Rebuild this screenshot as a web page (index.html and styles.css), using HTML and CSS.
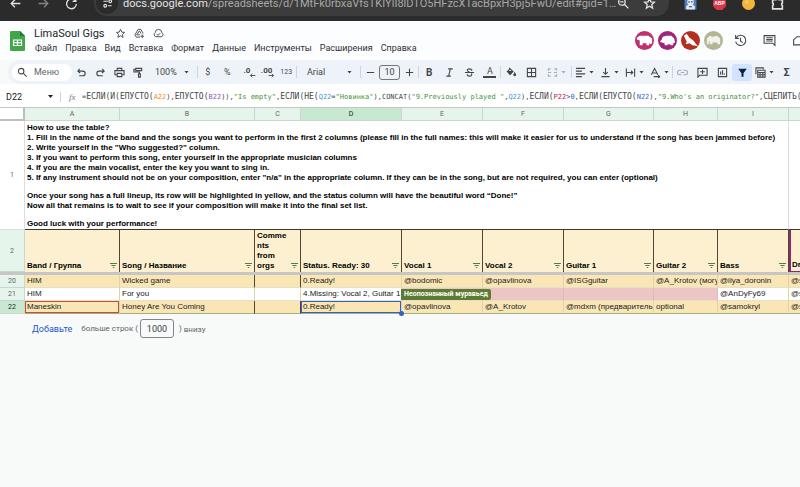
FILE: index.html
```html
<!DOCTYPE html>
<html lang="ru">

<head>
    <meta charset="UTF-8">
    <meta name="viewport" content="width=device-width, initial-scale=1.0">
    <title>LimaSoul Gigs</title>
    <link rel="stylesheet" href="styles.css">
</head>

<body>
    <div class="browser">
        <div class="browser-row">
            <button class="nav-btn" aria-label="Back"><svg viewBox="0 0 24 24"><path d="M21 12H4M11 5l-7 7 7 7" /></svg></button>
            <button class="nav-btn dim" aria-label="Forward"><svg viewBox="0 0 24 24"><path d="M3 12h17M13 5l7 7-7 7" /></svg></button>
            <button class="nav-btn" aria-label="Reload"><svg viewBox="0 0 24 24"><path d="M19 7a9 9 0 1 0 2 6M20 2v6h-6" /></svg></button>
            <div class="address">
                <button class="site-info" aria-label="Site info"><svg viewBox="0 0 24 24"><path d="M3 7h10M13 17h8" /><circle cx="18" cy="7" r="3" /><circle cx="7" cy="17" r="3" /></svg></button>
                <span class="url">docs.google.com<span class="path">/spreadsheets/d/1MtFk0rbxaVfsTKIYlI8lDTO5HFzcXTacBpxH3pj5FwU/edit#gid=1…</span></span>
                <svg class="address-icon" viewBox="0 0 24 24"><circle cx="9" cy="9" r="6" /><path d="M13.500 13.500L21 21M6 9h6" /></svg>
                <svg class="address-icon" viewBox="0 0 24 24"><path d="M12 3l2.700 6 6.300.6-4.800 4.300 1.500 6.500L12 17l-5.700 3.400 1.500-6.500L3 9.600 9.300 9z" /></svg>
            </div>
            <div class="extensions">
                <svg viewBox="0 0 24 24"><rect x="1" y="1" width="22" height="22" fill="#4f7fb5" /><path d="M4 23v-6l4-3h8l4 3v6z" fill="#dfe9f2" /><circle cx="12" cy="9" r="6" fill="#e8eef4" /><path d="M8 9h3M13 9h3M9 18h6" stroke="#27507e" stroke-width="2" /></svg>
                <svg viewBox="0 0 24 24"><path d="M7 0h10l7 7v10l-7 7H7l-7-7V7z" fill="#d9364c" /><text x="12" y="15" class="abp">ABP</text></svg>
                <svg viewBox="0 0 24 24"><circle cx="12" cy="12" r="12" fill="#f3b53c" /><circle cx="9" cy="9" r="3" fill="#f8cf75" /></svg>
                <svg viewBox="0 0 24 24"><path d="M3 5h6a3 3 0 0 1 6 0h6v6a3 3 0 0 0 0 5v6H3v-6a3 3 0 0 0 0-5z" fill="none" stroke="#e3e3e3" stroke-width="3" /></svg>
            </div>
        </div>
    </div>

    <header class="doc-header">
        <svg class="sheets-logo" viewBox="0 0 15 20"><path d="M1 0h9l5 5v14a1 1 0 0 1-1 1H1a1 1 0 0 1-1-1V1a1 1 0 0 1 1-1z" fill="#41a64a" /><path d="M10 0l5 5h-5z" fill="#237a35" /><path d="M3.500 9h8v5.500h-8zM7.500 9v5.500M3.500 11.700h8" fill="none" stroke="#fff" stroke-width="1.200" /></svg>
        <div class="doc-info">
            <div class="title-row">
                <h1>LimaSoul Gigs</h1>
                <button class="icon-btn" aria-label="Star"><svg viewBox="0 0 24 24"><path d="M12 3l2.700 6 6.300.6-4.800 4.300 1.500 6.500L12 17l-5.700 3.400 1.500-6.500L3 9.600 9.300 9z" /></svg></button>
                <button class="icon-btn" aria-label="Move"><svg viewBox="0 0 24 24"><path d="M13 20H5l-3-5L9 3h6l5 9M6 15l6-9 3 6M6 15h7M18 14v8M14 18h8" /></svg></button>
                <button class="icon-btn" aria-label="Saved"><svg viewBox="0 0 24 24"><path d="M6 19a5 5 0 0 1-1-9 7 7 0 0 1 14 0 5 5 0 0 1 0 9zM8 13l3 3 5-5" /></svg></button>
            </div>
            <nav class="menu">
                <a href="#">Файл</a>
                <a href="#">Правка</a>
                <a href="#">Вид</a>
                <a href="#">Вставка</a>
                <a href="#">Формат</a>
                <a href="#">Данные</a>
                <a href="#">Инструменты</a>
                <a href="#">Расширения</a>
                <a href="#">Справка</a>
            </nav>
        </div>
        <div class="people">
            <svg viewBox="0 0 20 20"><circle cx="10" cy="10" r="10" fill="#c0316b" /><path d="M2 7l3-2h9l4 3v5l-2 1-1-2v3h-3v-2H8v2H5v-5l-3-1z" fill="#fff" /></svg>
            <svg viewBox="0 0 20 20"><circle cx="10" cy="10" r="10" fill="#a0237c" /><path d="M2 11l2-2 1-3 4-1h5l3 3 1 4-2 1v2h-3v-1h-3v1H7v-2l-3-1z" fill="#fff" /></svg>
            <svg viewBox="0 0 20 20"><circle cx="10" cy="10" r="10" fill="#b3301f" /><path d="M3 5l3-2 3 4 4 3 3 4 2 2-6-1-3-2-4 1 1-3-2-4z" fill="#fff" /></svg>
            <svg viewBox="0 0 20 20"><circle cx="10" cy="10" r="10" fill="#b3b595" /><path d="M3 14V8l3-3 3 1 5-1 3 3v6h-3v-2H9v2H6v-3H5v3z" fill="#f2f2e8" /></svg>
        </div>
        <div class="doc-actions">
            <button class="icon-btn big" aria-label="History"><svg viewBox="0 0 24 24"><path d="M4 7a9.500 9.500 0 1 1-1 7M3 2v6h6M12 7v6l4 3" /></svg></button>
            <button class="icon-btn big" aria-label="Comments"><svg viewBox="0 0 24 24"><path d="M2 3h20v18l-4-4H2zM6 7h12M6 10h12M6 13h12" /></svg></button>
            <button class="icon-btn big" aria-label="Call"><svg viewBox="0 0 24 24"><path d="M3 20V11l6-6h12v15z" /></svg></button>
        </div>
    </header>

    <div class="toolbar">
        <label class="search"><svg viewBox="0 0 24 24"><circle cx="9" cy="9" r="6" /><path d="M14 14l7 7" /></svg><input type="text" placeholder="Меню"></label>
        <div class="group history">
            <button aria-label="Undo"><svg viewBox="0 0 24 24"><path d="M8 4L4 9l5 4M4 9h11a5 5 0 0 1 0 10H7" /></svg></button>
            <button aria-label="Redo"><svg viewBox="0 0 24 24"><path d="M16 4l4 5-5 4M20 9H9a5 5 0 0 0 0 10h8" /></svg></button>
            <button aria-label="Print"><svg viewBox="0 0 24 24"><path d="M7 8V3h10v5M6 17H2V8h20v9h-4M7 14h10v7H7z" /></svg></button>
            <button aria-label="Paint format"><svg viewBox="0 0 24 24"><path d="M6 3h13v5H6zM6 5H2v6h12v4M12 15h4v7h-4z" /></svg></button>
        </div>
        <div class="group picker zoom">
            <select aria-label="Zoom"><option>100%</option></select><i class="caret"></i>
        </div>
        <div class="group numbers">
            <button>$</button>
            <button>%</button>
            <button class="decimal">.0<svg viewBox="0 0 24 24"><path d="M22 12H5M11 6l-6 6 6 6" /></svg></button>
            <button class="decimal">.00<svg viewBox="0 0 24 24"><path d="M2 12h17M13 6l6 6-6 6" /></svg></button>
            <button class="small">123</button>
        </div>
        <div class="group picker font">
            <select aria-label="Font"><option>Arial</option></select><i class="caret"></i>
        </div>
        <div class="group size">
            <button aria-label="Decrease"><svg viewBox="0 0 24 24"><path d="M4 12h16" /></svg></button>
            <input type="text" value="10" aria-label="Font size">
            <button aria-label="Increase"><svg viewBox="0 0 24 24"><path d="M4 12h16M12 4v16" /></svg></button>
        </div>
        <div class="group style">
            <button><b>B</b></button>
            <button aria-label="Italic"><svg viewBox="0 0 24 24"><path d="M9 4h10M5 20h10M14 4l-4 16" /></svg></button>
            <button aria-label="Strikethrough"><svg viewBox="0 0 24 24"><path d="M2 12h20M17 8c0-5-10-5-10-1 0 2 2 3 5 4M7 16c0 5 10 5 10 1 0-1 0-2-1-3" /></svg></button>
            <button><span class="text-color">A</span></button>
        </div>
        <div class="group cells">
            <button aria-label="Fill"><svg viewBox="0 0 24 24"><path d="M7 2l8 8-6 6-6-6 6-6" /><path d="M4 10h10l-5 6z" fill="#444746" /><path d="M19 13l2 4a2 2 0 1 1-4 0z" fill="#444746" /></svg></button>
            <button aria-label="Borders"><svg viewBox="0 0 24 24"><path d="M3 3h18v18H3zM12 3v18M3 12h18" /></svg></button>
        </div>
        <div class="group merge">
            <button class="drop off" aria-label="Merge"><svg viewBox="0 0 24 24"><path d="M8 4H3v4M16 4h5v4M8 20H3v-4M16 20h5v-4M2 12h7M22 12h-7" /></svg><i class="caret"></i></button>
        </div>
        <div class="group align">
            <button class="drop" aria-label="Horizontal align"><svg viewBox="0 0 24 24"><path d="M2 3h20M2 9h13M2 15h20M2 21h13" /></svg><i class="caret"></i></button>
            <button class="drop" aria-label="Vertical align"><svg viewBox="0 0 24 24"><path d="M12 2v14M7 11l5 5 5-5M3 21h18" /></svg><i class="caret"></i></button>
            <button class="drop" aria-label="Wrapping"><svg viewBox="0 0 24 24"><path d="M3 3v18M21 3v18M3 12h13M13 8l4 4-4 4" /></svg><i class="caret"></i></button>
            <button class="drop" aria-label="Rotation"><svg viewBox="0 0 24 24"><path d="M3 17L10 3l7 14M5 13h10M8 21h13M18 18l3 3-3 3" /></svg><i class="caret"></i></button>
        </div>
        <div class="group insert">
            <button class="off" aria-label="Link"><svg viewBox="0 0 24 24"><path d="M10 7H6a5 5 0 0 0 0 10h4M14 7h4a5 5 0 0 1 0 10h-4M8 12h8" /></svg></button>
            <button aria-label="Comment"><svg viewBox="0 0 24 24"><path d="M2 22V3h20v15H6zM12 6v9M7 10.500h10" /></svg></button>
            <button aria-label="Chart"><svg viewBox="0 0 24 24"><path d="M3 3h18v18H3zM8 17v-7M12 17V7M16 17v-3" /></svg></button>
            <button class="active" aria-label="Filter"><svg viewBox="0 0 24 24"><path d="M5 5h14l-6 8v7h-2v-7z" fill="#041e49" /></svg></button>
        </div>
        <button class="drop table-views" aria-label="Filter views"><svg viewBox="0 0 24 24"><path d="M2 16V2h16v3M6 7h16v15H6zM6 12h16M6 17h16M11 12v10M17 12v10" /></svg><i class="caret"></i></button>
        <button class="sum">Σ</button>
    </div>

    <div class="formula-bar">
        <button class="name-box">D22<i class="caret"></i></button>
        <span class="fx">fx</span>
        <div class="formula">=<b>ЕСЛИ(И(ЕПУСТО(</b><span class="orange">A22</span>),<b>ЕПУСТО(</b><span class="purple">B22</span>)),<span class="green">"Is empty"</span>,<b>ЕСЛИ(НЕ(</b><span class="cyan">Q22</span>=<span class="green">"Новинка"</span>),CONCAT(<span class="green">"9.Previously played "</span>,<span class="cyan">Q22</span>),<b>ЕСЛИ(</b><span class="red">P22</span>&gt;<span class="blue">0</span>,<b>ЕСЛИ(ЕПУСТО(</b><span class="blue">N22</span>),<span class="green">"9.Who's an originator?"</span>,<b>СЦЕПИТЬ(</b></div>
    </div>

    <main class="sheet">
        <table>
            <colgroup>
                <col class="c-num">
                <col class="c-band">
                <col class="c-song">
                <col class="c-comment">
                <col class="c-status">
                <col class="c-vocal">
                <col class="c-vocal">
                <col class="c-guitar1">
                <col class="c-guitar2">
                <col class="c-bass">
                <col class="c-drums">
            </colgroup>
            <thead>
                <tr class="letters">
                    <td class="corner"></td>
                    <th>A</th>
                    <th>B</th>
                    <th>C</th>
                    <th class="current">D</th>
                    <th>E</th>
                    <th>F</th>
                    <th>G</th>
                    <th>H</th>
                    <th>I</th>
                    <th>J</th>
                </tr>
            </thead>
            <tbody>
                <tr class="intro">
                    <th>1</th>
                    <td colspan="9">
                        <p>How to use the table?<br>
                            1. Fill in the name of the band and the songs you want to perform in the first 2 columns (please fill in the full names: this will make it easier for us to understand if the song has been jammed before)<br>
                            2. Write yourself in the "Who suggested?" column.<br>
                            3. If you want to perform this song, enter yourself in the appropriate musician columns<br>
                            4. If you are the main vocalist, enter the key you want to sing in.<br>
                            5. If any instrument should not be on your composition, enter "n/a" in the appropriate column. If they can be in the song, but are not required, you can enter (optional)</p>
                        <p>Once your song has a full lineup, its row will be highlighted in yellow, and the status column will have the beautiful word “Done!”<br>
                            Now all that remains is to wait to see if your composition will make it into the final set list.</p>
                        <p>Good luck with your performance!</p>
                    </td>
                    <td></td>
                </tr>
                <tr class="heads">
                    <th>2</th>
                    <td><div>Band / Группа<i class="filter"></i></div></td>
                    <td><div>Song / Название<i class="filter"></i></div></td>
                    <td><div>Comme<br>nts<br>from<br>orgs<i class="filter"></i></div></td>
                    <td><div>Status. Ready: 30<i class="filter"></i></div></td>
                    <td><div>Vocal 1<i class="filter"></i></div></td>
                    <td><div>Vocal 2<i class="filter"></i></div></td>
                    <td><div>Guitar 1<i class="filter"></i></div></td>
                    <td><div>Guitar 2<i class="filter"></i></div></td>
                    <td><div>Bass<i class="filter"></i></div></td>
                    <td class="editing"><div>Drums<i class="filter"></i></div></td>
                </tr>
                <tr class="freeze">
                    <td colspan="11"></td>
                </tr>
                <tr class="ready">
                    <th>20</th>
                    <td>HIM</td>
                    <td>Wicked game</td>
                    <td></td>
                    <td>0.Ready!</td>
                    <td>@bodomic</td>
                    <td>@opavlinova</td>
                    <td>@ISGguitar</td>
                    <td>@A_Krotov (могу</td>
                    <td>@ilya_doronin</td>
                    <td>@samokryl</td>
                </tr>
                <tr>
                    <th>21</th>
                    <td>HIM</td>
                    <td>For you</td>
                    <td></td>
                    <td>4.Missing: Vocal 2, Guitar 1</td>
                    <td class="missing tagged"><span class="tag">Неопознанный муравьед</span></td>
                    <td class="missing"></td>
                    <td class="missing"></td>
                    <td class="missing"></td>
                    <td>@AnDyFy69</td>
                    <td>@samokryl</td>
                </tr>
                <tr class="ready current">
                    <th>22</th>
                    <td class="picked">Maneskin</td>
                    <td>Honey Are You Coming</td>
                    <td></td>
                    <td class="selected">0.Ready!</td>
                    <td>@opavlinova</td>
                    <td>@A_Krotov</td>
                    <td>@mdxm (предваритель</td>
                    <td>optional</td>
                    <td>@samokryl</td>
                    <td>@samokryl</td>
                </tr>
            </tbody>
        </table>
        <form class="add-rows">
            <button type="button">Добавьте</button>
            <label for="rowCount">больше строк (</label>
            <input type="text" id="rowCount" value="1000">
            <span class="close">)</span>
            <span class="below">внизу</span>
        </form>
    </main>
</body>

</html>
```

FILE: styles.css
```css
* {
    box-sizing: border-box;
}

body {
    margin: 0;
    font-family: Roboto, "Liberation Sans", sans-serif;
    font-size: 9px;
    background-color: #f8faf9;
    color: #444746;
    min-height: 100vh;
    overflow: hidden;
}

a {
    text-decoration: none;
    color: inherit;
}

button,
input,
select {
    font: inherit;
    color: inherit;
    background: none;
    border: none;
    padding: 0;
    margin: 0;
}

svg {
    display: block;
    flex: none;
}

button svg,
.search svg,
.address-icon {
    width: 11px;
    height: 11px;
    fill: none;
    stroke: currentColor;
    stroke-width: 2.4;
}

/* Browser bar */
.browser {
    height: 21px;
    overflow: hidden;
    background-color: #2b2b2b;
}

.browser-row {
    display: flex;
    align-items: center;
    height: 36px;
    margin-top: -15px;
    padding: 0 16px 0 1px;
    color: #e3e3e3;
}

.nav-btn {
    flex: none;
    display: flex;
    justify-content: center;
    width: 28px;
}

.nav-btn svg {
    width: 13px;
    height: 13px;
}

.nav-btn.dim {
    color: #858585;
}

.address {
    flex: 1;
    min-width: 0;
    display: flex;
    align-items: center;
    gap: 13px;
    height: 26px;
    margin: 0 15px 0 9px;
    padding: 0 13px 0 2px;
    border-radius: 13px;
    background-color: #3c3c3c;
}

.address-icon {
    width: 13px;
    height: 13px;
}

.site-info {
    flex: none;
    display: flex;
    align-items: center;
    justify-content: center;
    width: 22px;
    height: 22px;
    margin-right: -8px;
    border-radius: 50%;
    background-color: #2b2b2b;
}

.url {
    flex: 1;
    min-width: 0;
    white-space: nowrap;
    font-size: 11px;
}

.path {
    color: #a8a8a8;
}

.extensions {
    flex: none;
    display: flex;
    gap: 16px;
}

.extensions svg {
    width: 13px;
    height: 13px;
}

.abp {
    font: bold 9px "Liberation Sans", sans-serif;
    fill: #fff;
    text-anchor: middle;
}

/* Document header */
.doc-header {
    display: flex;
    align-items: center;
    height: 39px;
    padding-left: 10px;
    background-color: #fbfdfe;
    overflow: hidden;
}

.sheets-logo {
    width: 15px;
    height: 20px;
}

.doc-info {
    flex: 1;
    margin-left: 9px;
}

.title-row {
    display: flex;
    align-items: center;
    gap: 8px;
    height: 15px;
}

.title-row h1 {
    margin: 0 2px 0 0;
    font-size: 11px;
    font-weight: normal;
    color: #1f1f1f;
}

.menu {
    display: flex;
    gap: 8px;
    height: 15px;
    line-height: 15px;
    margin-left: 1px;
    color: #303030;
}

.people {
    display: flex;
    gap: 4px;
}

.people svg {
    width: 19px;
    height: 19px;
}

.doc-actions {
    display: flex;
    gap: 16px;
    margin-left: 11px;
    margin-right: -5px;
}

.icon-btn svg {
    width: 11px;
    height: 11px;
    stroke-width: 2;
}

.icon-btn.big svg {
    width: 13px;
    height: 13px;
}

/* Toolbar */
.toolbar {
    display: flex;
    align-items: center;
    height: 24px;
    margin-left: 8px;
    padding-left: 4px;
    border-radius: 12px 0 0 12px;
    background-color: #eef3fa;
    overflow: hidden;
}

.toolbar > * {
    flex: none;
}

.search {
    display: flex;
    align-items: center;
    gap: 6px;
    width: 60px;
    height: 17px;
    padding-left: 5px;
    border-radius: 9px;
    background-color: #fff;
}

.search input {
    width: 34px;
}

.search input::placeholder {
    color: #5f6368;
    opacity: 1;
}

.group {
    display: flex;
    align-items: center;
    height: 12px;
    border-right: 1px solid #cfd4da;
}

.group button {
    flex: 1;
    display: flex;
    align-items: center;
    justify-content: center;
}

.group .off {
    color: #a9adb2;
}

.history {
    width: 76px;
    border-right: none;
}

.picker {
    padding: 0 8px 0 7px;
}

.picker select {
    flex: 1;
    min-width: 0;
    appearance: none;
}

.zoom {
    width: 50px;
}

.numbers {
    width: 99px;
}

.numbers .decimal {
    position: relative;
    height: 12px;
    padding-bottom: 4px;
    font-size: 8px;
    font-weight: bold;
}

.decimal svg {
    position: absolute;
    right: 1px;
    bottom: -1px;
    width: 7px;
    height: 7px;
    stroke-width: 3;
}

.numbers .small {
    font-size: 7px;
}

.font {
    width: 64px;
    padding-left: 10px;
}

.size {
    width: 58px;
}

.size input {
    width: 21px;
    height: 15px;
    border: 1px solid #747775;
    border-radius: 3px;
    text-align: center;
}

.style {
    width: 82px;
}

.style b {
    font-size: 10px;
}

.text-color {
    width: 13px;
    line-height: 10px;
    border-bottom: 2px solid #444746;
}

.cells {
    width: 41px;
    border-right: none;
}

.merge {
    width: 30px;
}

.caret {
    flex: none;
    width: 5px;
    height: 3px;
    background-color: currentColor;
    clip-path: polygon(0 0, 100% 0, 50% 100%);
}

.drop {
    display: flex;
    align-items: center;
    justify-content: center;
    gap: 3px;
}

.align {
    width: 101px;
}

.insert {
    width: 79px;
    border-right: none;
}

.insert .active {
    height: 17px;
    border-radius: 3px;
    background-color: #d3e3fd;
    color: #041e49;
}

.table-views {
    width: 25px;
}

.sum {
    width: 19px;
    font-size: 11px;
    font-weight: bold;
}

/* Formula bar */
.formula-bar {
    display: flex;
    align-items: center;
    height: 23px;
    padding-top: 2px;
    background-color: #fff;
    overflow: hidden;
}

.name-box {
    flex: none;
    display: flex;
    align-items: center;
    justify-content: space-between;
    width: 61px;
    height: 10px;
    padding: 0 7px 0 6px;
    border-right: 1px solid #cfd4da;
    color: #202124;
}

.fx {
    flex: none;
    width: 21px;
    padding-left: 8px;
    font: italic 9px "Liberation Serif", serif;
    color: #777;
}

.formula {
    white-space: nowrap;
    font-family: "DejaVu Sans Mono", monospace;
    font-size: 7px;
}

.formula b {
    font-size: 8px;
    font-weight: normal;
}

.orange {
    color: #f0932b;
}

.purple {
    color: #8e5bbd;
}

.green {
    color: #3f8f3a;
}

.cyan {
    color: #3e9ccf;
}

.red {
    color: #c2185b;
}

.blue {
    color: #3367d6;
}

/* Spreadsheet */
.sheet {
    overflow: hidden;
    font-family: "Liberation Sans", Arial, sans-serif;
    font-size: 8px;
}

table {
    width: 882px;
    table-layout: fixed;
    border-collapse: separate;
    border-spacing: 0;
}

.c-num {
    width: 25px;
}

.c-band {
    width: 95px;
}

.c-song {
    width: 135px;
}

.c-comment {
    width: 46px;
}

.c-status {
    width: 101px;
}

.c-vocal {
    width: 81px;
}

.c-guitar1 {
    width: 90px;
}

.c-guitar2 {
    width: 64px;
}

.c-bass {
    width: 71px;
}

.c-drums {
    width: 93px;
}

th,
td {
    height: 13px;
    padding: 0 2px;
    line-height: 10px;
    text-align: left;
    white-space: nowrap;
    overflow: hidden;
    border-right: 1px solid #e0d3ac;
    border-bottom: 1px solid #e6e0c8;
    background-color: #fff;
    color: #222;
}

th {
    padding: 0;
    font-family: Roboto, sans-serif;
    font-size: 7px;
    font-weight: normal;
    text-align: center;
    color: #5f6368;
    background-color: #e6f5ec;
    border-color: #c9d8cf;
}

.letters th,
.letters td {
    height: 14px;
    border-top: 1px solid #c4c7c5;
}

.letters .current {
    background-color: #c8e8cf;
    color: #1f1f1f;
}

.letters .corner {
    border-right: 2px solid #bdbdbd;
    border-bottom: 2px solid #bdbdbd;
}

.intro th {
    background-color: #fff;
    border-color: #ddd;
}

.intro td {
    padding: 2px 2px 0;
    vertical-align: top;
    font-weight: bold;
    color: #000;
    border-right-color: #ddd;
    border-bottom-color: #3b3928;
}

.intro p {
    margin: 0 0 8px;
}

.intro p:last-child {
    margin: 0;
}

.heads td {
    height: 42px;
    padding-bottom: 1px;
    vertical-align: bottom;
    font-weight: bold;
    color: #000;
    background-color: #fdf0d0;
    border-right-color: #4b4835;
    border-bottom: none;
}

.heads div {
    display: flex;
    align-items: flex-end;
    justify-content: space-between;
}

.filter {
    width: 7px;
    height: 5px;
    margin-bottom: 3px;
    background-color: #557a45;
    clip-path: polygon(0 0, 100% 0, 100% 20%, 0 20%, 0 0, 20% 40%, 80% 40%, 80% 60%, 20% 60%, 20% 40%, 40% 80%, 60% 80%, 60% 100%, 40% 100%, 40% 80%, 20% 40%, 0 0);
}

.heads .editing {
    border-left: 2px solid #8e2a6a;
    border-bottom: 1px solid #8e2a6a;
    padding-left: 1px;
}

.freeze td {
    height: 3px;
    padding: 0;
    line-height: 0;
    border: none;
    background-color: #c6c6c6;
}

.ready td {
    background-color: #fae5b5;
}

.ready td:nth-child(3),
.ready td:nth-child(4) {
    border-right-color: #4b4835;
}

.ready.current td {
    border-bottom-color: #a3b07b;
}

.current th {
    background-color: #c8e8cf;
    color: #1f1f1f;
}

.sheet .missing {
    background-color: #ecc5c5;
    border-right-color: #e3b8b8;
}

.tagged {
    position: relative;
    overflow: visible;
}

.tag {
    position: absolute;
    left: -1px;
    top: 1px;
    z-index: 1;
    padding: 0 3px;
    border-radius: 0 2px 2px 0;
    font: bold 7px/11px Roboto, sans-serif;
    color: #fff;
    background-color: #5d7b31;
}

.picked {
    box-shadow: inset 0 0 0 1px #c0503a;
}

.selected {
    position: relative;
    overflow: visible;
    box-shadow: inset 0 0 0 1px #2f62c9;
}

.selected::after {
    content: "";
    position: absolute;
    right: -3px;
    bottom: -3px;
    width: 5px;
    height: 5px;
    border-radius: 50%;
    background-color: #2f62c9;
}

/* Add rows */
.add-rows {
    display: flex;
    align-items: center;
    padding: 5px 32px;
    font-family: Roboto, sans-serif;
    font-size: 8px;
    color: #5f6368;
}

.add-rows button {
    margin-right: 9px;
    font-size: 9px;
    color: #1a56c8;
}

.add-rows input {
    width: 34px;
    height: 19px;
    margin: 0 5px 0 2px;
    border: 1px solid #80868b;
    border-radius: 3px;
    font-size: 9px;
    text-align: center;
    color: #3c4043;
}

.add-rows .below {
    margin-left: 2px;
    padding-top: 2px;
}
```
